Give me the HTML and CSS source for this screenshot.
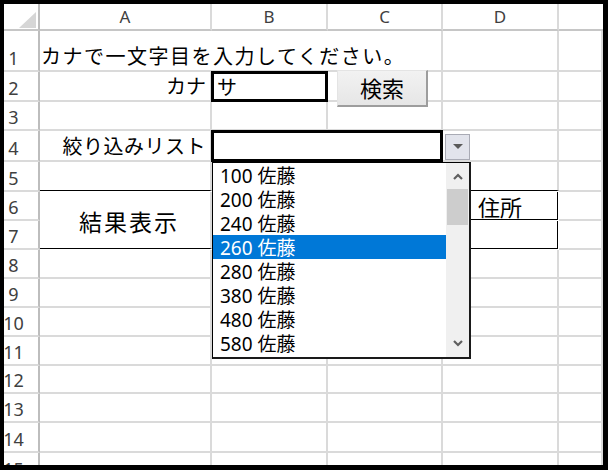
FILE: index.html
```html
<!DOCTYPE html>
<html lang="ja">
<head>
<meta charset="utf-8">
<title>Excel sheet</title>
<link rel="stylesheet" href="styles.css">
</head>
<body>
<div class="frame">
  <div class="sheet">
    <div class="corner"><svg class="tri" width="17" height="16" viewBox="0 0 17 16"><polygon points="17,0 17,16 0,16" fill="#d6d6d6"/></svg></div>
    <div class="ch">A</div><div class="ch">B</div><div class="ch">C</div><div class="ch">D</div><div class="ch ch-last"></div>

    <div class="rh">1</div>
    <div class="c span3 txt wide">カナで一文字目を入力してください。</div>
    <div class="c"></div><div class="c"></div>

    <div class="rh">2</div>
    <div class="c txt right">カナ</div>
    <div class="c thick txt">サ</div>
    <div class="c"></div><div class="c"></div><div class="c"></div>

    <div class="rh">3</div>
    <div class="c"></div><div class="c"></div><div class="c"></div><div class="c"></div><div class="c"></div>

    <div class="rh">4</div>
    <div class="c txt right label4">絞り込みリスト</div>
    <div class="c span2 thick"></div>
    <div class="c"></div><div class="c"></div>

    <div class="rh">5</div>
    <div class="c bk-b"></div><div class="c bk-b"></div><div class="c bk-b"></div><div class="c bk-b"></div><div class="c"></div>

    <div class="rh">6</div>
    <div class="c rows2 head result bk-b">結果表示</div>
    <div class="c"></div><div class="c"></div>
    <div class="c head bk-b bk-r">住所</div>
    <div class="c"></div>

    <div class="rh">7</div>
    <div class="c bk-b"></div><div class="c bk-b"></div>
    <div class="c bk-b bk-r"></div>
    <div class="c"></div>

    <div class="rh">8</div>
    <div class="c"></div><div class="c"></div><div class="c"></div><div class="c"></div><div class="c"></div>
    <div class="rh">9</div>
    <div class="c"></div><div class="c"></div><div class="c"></div><div class="c"></div><div class="c"></div>
    <div class="rh">10</div>
    <div class="c"></div><div class="c"></div><div class="c"></div><div class="c"></div><div class="c"></div>
    <div class="rh">11</div>
    <div class="c"></div><div class="c"></div><div class="c"></div><div class="c"></div><div class="c"></div>
    <div class="rh">12</div>
    <div class="c"></div><div class="c"></div><div class="c"></div><div class="c"></div><div class="c"></div>
    <div class="rh">13</div>
    <div class="c"></div><div class="c"></div><div class="c"></div><div class="c"></div><div class="c"></div>
    <div class="rh">14</div>
    <div class="c"></div><div class="c"></div><div class="c"></div><div class="c"></div><div class="c"></div>
    <div class="rh">15</div>
    <div class="c"></div><div class="c"></div><div class="c"></div><div class="c"></div><div class="c"></div>
  </div>

  <div class="btn">検索</div>

  <div class="dd-arrow"><svg width="10" height="6" viewBox="0 0 10 6"><polygon points="0,0 10,0 5,5" fill="#5a5a5a"/></svg></div>

  <div class="list">
    <div class="items">
      <div class="item">100 佐藤</div>
      <div class="item">200 佐藤</div>
      <div class="item">240 佐藤</div>
      <div class="item sel">260 佐藤</div>
      <div class="item">280 佐藤</div>
      <div class="item">380 佐藤</div>
      <div class="item">480 佐藤</div>
      <div class="item">580 佐藤</div>
    </div>
    <div class="scroll">
      <svg class="chev" width="10" height="7" viewBox="0 0 10 7"><polyline points="1,6 5,2 9,6" fill="none" stroke="#5f5f5f" stroke-width="2.2"/></svg>
      <div class="thumb"></div>
      <div class="spacer"></div>
      <svg class="chev" width="10" height="7" viewBox="0 0 10 7"><polyline points="1,1 5,5 9,1" fill="none" stroke="#5f5f5f" stroke-width="2.2"/></svg>
    </div>
  </div>
</div>
</body>
</html>
```

FILE: styles.css
```css
* { box-sizing: border-box; }

html, body {
  margin: 0;
  padding: 0;
  background: #000;
}

.frame {
  position: relative;
  margin: 4px 5px 5px 4px;
  width: 599px;
  height: 461px;
  background: #fff;
  overflow: hidden;
  font-family: "Noto Sans CJK JP", "Noto Sans", sans-serif;
  color: #000;
}

.sheet {
  display: grid;
  grid-template-columns: 36px 172px 116px 115px 116px 44px;
  grid-template-rows: 27px 41px 30px 29px 31px 30px 29px 29px 29px 29px 29px 29px 28px 29px 30px 30px;
}

.corner {
  border-right: 2px solid #bdbdbd;
  border-bottom: 2px solid #c6c6c6;
  position: relative;
}
.tri {
  position: absolute;
  left: 15px;
  top: 8px;
}

.ch {
  border-right: 2px solid #dadada;
  border-bottom: 2px solid #c6c6c6;
  font-family: "Noto Sans", sans-serif;
  font-size: 17px;
  color: #404040;
  display: flex;
  align-items: center;
  justify-content: center;
  line-height: 1;
  padding-bottom: 1px;
}
.ch-last { border-right: none; }

.rh {
  border-right: 2px solid #bdbdbd;
  border-bottom: 2px solid #dadada;
  font-family: "Noto Sans", sans-serif;
  font-size: 18px;
  color: #404040;
  display: flex;
  align-items: flex-end;
  justify-content: center;
  padding-right: 15px;
  padding-bottom: 3px;
  line-height: 1;
  white-space: nowrap;
}

.c {
  border-right: 2px solid #dadada;
  border-bottom: 2px solid #dadada;
  min-width: 0;
}

.txt {
  display: flex;
  align-items: flex-end;
  font-size: 20px;
  line-height: 1;
  padding: 0 2px 4px 2px;
  white-space: nowrap;
}
.wide { letter-spacing: 1.5px; padding-left: 1px; }
.label4 { letter-spacing: 0.5px; }
.right { justify-content: flex-end; padding-right: 4px; }

.span3 { grid-column: span 3; overflow: visible; }
.span2 { grid-column: span 2; }
.rows2 { grid-row: span 2; }

.thick {
  border: 3px solid #000;
  margin: -1px 0 0 -1px;
  padding-left: 3px;
  padding-bottom: 2px;
}

.bk-b { border-bottom: 1px solid #000; margin-bottom: 1px; }
.bk-r { border-right: 1px solid #000; margin-right: 1px; }

.head {
  display: flex;
  align-items: center;
  justify-content: center;
  font-size: 22px;
  line-height: 1;
}
.result {
  font-size: 23px;
  letter-spacing: 2px;
  padding-top: 3px;
  padding-left: 8px;
}

.btn {
  position: absolute;
  left: 333px;
  top: 66px;
  width: 91px;
  height: 37px;
  background: linear-gradient(#f2f2f2, #e6e6e6);
  border-top: 1px solid #e4e4e4;
  border-left: 1px solid #e4e4e4;
  border-right: 2px solid #9d9d9d;
  border-bottom: 2px solid #9d9d9d;
  display: flex;
  align-items: center;
  justify-content: center;
  font-size: 22px;
  line-height: 1;
  padding-bottom: 2px;
}

.dd-arrow {
  position: absolute;
  left: 441px;
  top: 130px;
  width: 25px;
  height: 26px;
  background: #e2e4ec;
  border: 1px solid #a9abb5;
  display: flex;
  align-items: center;
  justify-content: center;
}

.list {
  position: absolute;
  left: 208px;
  top: 158px;
  width: 259px;
  height: 197px;
  background: #fff;
  border-left: 1px solid #000;
  border-top: 1px solid #000;
  border-right: 2px solid #1a1a1a;
  border-bottom: 2px solid #1a1a1a;
  display: flex;
}

.items {
  flex: 1;
  display: flex;
  flex-direction: column;
}

.item {
  height: 24px;
  display: flex;
  align-items: center;
  padding-top: 2px;
  line-height: 1;
  font-family: "Noto Sans", "Noto Sans CJK JP", sans-serif;
  font-size: 19px;
  padding-left: 7px;
  white-space: nowrap;
}
.item.sel {
  background: #0078d7;
  color: #fff;
}

.scroll {
  width: 23px;
  background: #f0f0f0;
  display: flex;
  flex-direction: column;
  align-items: center;
  padding: 10px 0 10px 0;
}
.chev { flex: none; }
.thumb {
  width: 21px;
  height: 36px;
  margin-top: 9px;
  background: #cdcdcd;
}
.spacer { flex: 1; }
```
